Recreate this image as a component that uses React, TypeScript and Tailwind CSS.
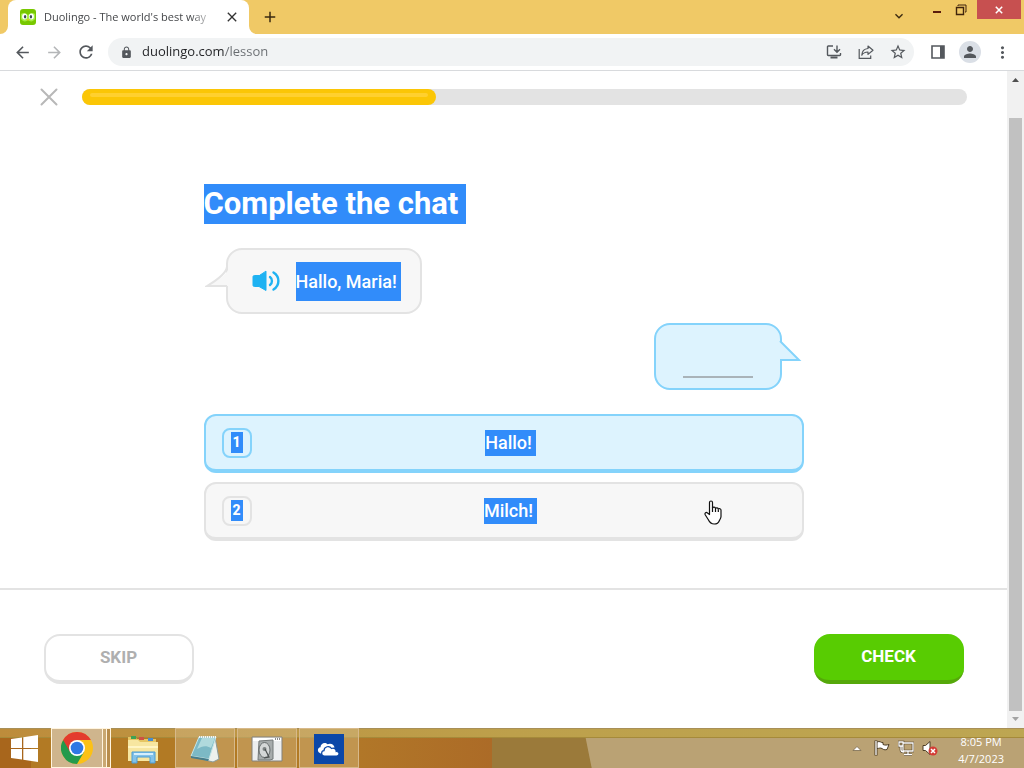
import { useState } from "react";
import type { ReactNode } from "react";
import {
  MdAdd,
  MdArrowBack,
  MdArrowForward,
  MdClose,
  MdExpandMore,
  MdLock,
  MdMoreVert,
  MdPerson,
  MdRefresh,
  MdStarBorder,
} from "react-icons/md";
import clsx from "clsx";

const options = ["Hallo!", "Milch!"];

interface IIconButton {
  label: string;
  className?: string;
  children: ReactNode;
}

const IconButton: React.FC<IIconButton> = ({ label, className, children }) => (
  <button
    type="button"
    aria-label={label}
    className={clsx(
      "flex h-7 w-8 shrink-0 items-center justify-center text-[#54585d]",
      className
    )}
  >
    {children}
  </button>
);

const OwlIcon = () => (
  <svg viewBox="0 0 16 16" className="h-4 w-4 shrink-0">
    <rect width="16" height="16" rx="3" fill="#78c800" />
    <path d="M1 5c2-2 5-1 7 1 2-2 5-3 7-1v5c-2 3-5 3-7 1-2 2-5 2-7-1z" fill="#a5ed42" />
    <ellipse cx="4.6" cy="7.6" rx="2.5" ry="3" fill="#fff" />
    <ellipse cx="11.4" cy="7.6" rx="2.5" ry="3" fill="#fff" />
    <ellipse cx="5.1" cy="7.8" rx="1.2" ry="1.7" fill="#3c4c55" />
    <ellipse cx="10.9" cy="7.8" rx="1.2" ry="1.7" fill="#3c4c55" />
    <path d="M6.8 10.2h2.4L8 12z" fill="#ffc200" />
  </svg>
);

const TitleBar = () => (
  <header className="flex h-[34px] bg-[#f0c966] pl-2 text-[#3a2a10]">
    <div className="relative flex w-[241px] items-center rounded-t-lg bg-white pl-3 pr-2">
      <svg viewBox="0 0 8 8" className="absolute bottom-0 -left-2 h-2 w-2">
        <path d="M8 0v8H0a8 8 0 0 0 8-8z" fill="#fff" />
      </svg>
      <svg viewBox="0 0 8 8" className="absolute bottom-0 -right-2 h-2 w-2">
        <path d="M0 0v8h8a8 8 0 0 1-8-8z" fill="#fff" />
      </svg>
      <OwlIcon />
      <span className="ml-2 w-[172px] whitespace-nowrap text-[11px] text-[#45474a] [mask-image:linear-gradient(90deg,#000_85%,transparent)]">
        Duolingo - The world's best way
      </span>
      <button type="button" aria-label="Close tab" className="ml-2 text-[#333]">
        <MdClose size={16} />
      </button>
    </div>
    <button type="button" aria-label="New tab" className="ml-3">
      <MdAdd size={18} />
    </button>
    <div className="ml-auto flex items-start">
      <button type="button" aria-label="Search tabs" className="mt-2 mr-[18px]">
        <MdExpandMore size={16} />
      </button>
      <button type="button" aria-label="Minimize" className="flex h-5 w-6 items-center justify-center">
        <svg viewBox="0 0 12 12" className="h-3 w-3">
          <path d="M2 8h8" stroke="#5a1c0c" strokeWidth="2" />
        </svg>
      </button>
      <button type="button" aria-label="Restore" className="mr-1 flex h-5 w-6 items-center justify-center">
        <svg viewBox="0 0 12 12" className="h-3 w-3" fill="none" stroke="#40240c">
          <path d="M3 2V1h8v7h-1" />
          <path d="M1.5 3.5h7v7h-7z" strokeWidth="1.4" />
        </svg>
      </button>
      <button
        type="button"
        aria-label="Close"
        className="mr-[3px] flex h-[19px] w-11 items-center justify-center bg-[#c75050] text-white"
      >
        <svg viewBox="0 0 10 10" className="h-2 w-2" stroke="currentColor" strokeWidth="1.9">
          <path d="M1 1l8 8M9 1L1 9" />
        </svg>
      </button>
    </div>
  </header>
);

const Toolbar = () => {
  const [url, setUrl] = useState("duolingo.com/lesson");

  return (
    <nav className="flex h-[37px] items-center border-b border-[#d8dadd] bg-white px-1.5">
      <IconButton label="Back">
        <MdArrowBack size={19} />
      </IconButton>
      <IconButton label="Forward" className="text-[#b4b6b8]">
        <MdArrowForward size={19} />
      </IconButton>
      <IconButton label="Reload">
        <MdRefresh size={20} />
      </IconButton>
      <div className="mr-2 ml-1.5 flex h-7 min-w-0 flex-1 items-center rounded-full bg-[#f1f3f4] pl-3">
        <MdLock size={13} className="shrink-0 text-[#54585d]" />
        <input
          aria-label="Address"
          value={url}
          onChange={(e) => setUrl(e.target.value)}
          className="ml-[9px] min-w-0 flex-1 bg-[linear-gradient(90deg,#202124_83px,#686c70_83px)] bg-clip-text text-[13px] text-transparent caret-black outline-none"
        />
        <IconButton label="Install">
          <svg viewBox="0 0 16 16" className="h-4 w-4" fill="none" stroke="currentColor" strokeWidth="1.4">
            <path d="M7 2H2.2a.7.7 0 0 0-.7.7v8.1c0 .4.3.7.7.7h11.6a.7.7 0 0 0 .7-.7V9M11 1.500v6M8 5.200l3 3 3-3" />
            <path d="M4.500 13.500h7" strokeWidth="2" />
          </svg>
        </IconButton>
        <IconButton label="Share">
          <svg viewBox="0 0 16 16" className="h-4 w-4" fill="none" stroke="currentColor" strokeWidth="1.200">
            <path d="M1.200 5v9.300h11.500V11.500" />
            <path d="M10 2l5 4.200-5 4.200V8C7 8 5 9 3.800 11.200 4 7.500 6.500 4.800 10 4.500z" strokeLinejoin="round" />
          </svg>
        </IconButton>
        <IconButton label="Bookmark">
          <MdStarBorder size={18} />
        </IconButton>
      </div>
      <IconButton label="Side panel">
        <svg viewBox="0 0 14 14" className="h-3.5 w-3.5">
          <path d="M1 1h12v12H1z" fill="none" stroke="currentColor" strokeWidth="1.600" />
          <path d="M9 1h4v12H9z" fill="currentColor" />
        </svg>
      </IconButton>
      <IconButton label="Profile">
        <span className="flex h-[22px] w-[22px] items-center justify-center rounded-full bg-[#dadfe6]">
          <MdPerson size={18} />
        </span>
      </IconButton>
      <IconButton label="Menu">
        <MdMoreVert size={19} />
      </IconButton>
    </nav>
  );
};

const LessonProgress = () => (
  <div className="mx-auto flex w-full max-w-[1007px] items-center gap-6 px-10 pt-[17px]">
    <button type="button" aria-label="Quit lesson">
      <svg viewBox="0 0 18 18" className="h-[18px] w-[18px]" stroke="#b8b8b8" strokeWidth="2">
        <path d="M1.500 1.500l15 15M16.500 1.500l-15 15" strokeLinecap="round" />
      </svg>
    </button>
    <div
      role="progressbar"
      aria-label="Lesson progress"
      aria-valuenow={40}
      className="h-4 flex-1 rounded-full bg-[#e3e3e3]"
    >
      <div className="h-4 w-2/5 rounded-full bg-[#fbc606] px-2 pt-1">
        <div className="h-1 rounded-full bg-[#ffd02f]" />
      </div>
    </div>
  </div>
);

const Chat = () => (
  <div className="mt-6">
    <div className="relative ml-[22px] flex h-[66px] w-fit items-center rounded-2xl border-2 border-[#e3e3e3] bg-[#f7f7f7] pr-[19px] pl-6">
      <svg viewBox="0 0 24 22" className="absolute top-4 -left-[23px] h-[22px] w-6">
        <path d="M24 1c-1 6-8 12-21 19h21z" fill="#f7f7f7" />
        <path d="M22 1c-1 6-8 12-20 19h20" fill="none" stroke="#e3e3e3" strokeWidth="2" />
      </svg>
      <button type="button" aria-label="Play audio">
        <svg viewBox="0 0 28 22" className="h-[22px] w-7" fill="none" stroke="#1fb2f2" strokeWidth="2.400" strokeLinecap="round">
          <path d="M14 1.500v19l-7-4H2.500C1.500 16.500 1 16 1 15V7C1 6 1.500 5.500 2.500 5.500H7z" fill="#1fb2f2" stroke="#1fb2f2" strokeWidth="1" />
          <path d="M18 7c2.600 2 2.600 6 0 8M21.500 2.500c6.500 4 6.500 13 0 17" />
        </svg>
      </button>
      <span className="ml-4 h-[39px] bg-[#318cfa] pr-1 text-lg leading-[39px] font-medium text-white">
        Hallo, Maria!
      </span>
    </div>
    <div className="relative mt-[9px] mr-[22px] ml-auto flex h-[67px] w-32 items-end justify-center rounded-2xl border-2 border-[#84d3fb] bg-[#ddf3fe] pb-2.5">
      <svg viewBox="0 0 26 22" className="absolute top-4 -right-6 h-[22px] w-[26px]">
        <path d="M0 0l3 1 19 18H0z" fill="#ddf3fe" />
        <path d="M2 0l19 19H2" fill="none" stroke="#84d3fb" strokeWidth="2" />
      </svg>
      <span className="h-0.5 w-[70px] bg-[#a9b3b9]" />
    </div>
  </div>
);

interface IOption {
  index: number;
  text: string;
  selected: boolean;
  onSelect: () => void;
}

const Option: React.FC<IOption> = ({ index, text, selected, onSelect }) => (
  <button
    type="button"
    aria-pressed={selected}
    onClick={onSelect}
    className={clsx(
      "flex h-[59px] w-full items-center rounded-xl border-2 border-b-4 px-4",
      selected ? "border-[#84d3fb] bg-[#ddf3fe]" : "border-[#e3e3e3] bg-[#f7f7f7]"
    )}
  >
    <span
      className={clsx(
        "flex h-[30px] w-[30px] items-center justify-center rounded-lg border-2 text-sm font-extrabold text-white",
        selected ? "border-[#84d3fb]" : "border-[#e3e3e3]"
      )}
    >
      <span className="h-[21px] w-3 bg-[#318cfa] leading-[21px]">{index}</span>
    </span>
    <span className="flex flex-1 justify-center pr-4">
      <span className="h-[26px] bg-[#318cfa] pr-1 text-lg leading-[26px] font-medium text-white">
        {text}
      </span>
    </span>
  </button>
);

const HandCursor = () => (
  <svg viewBox="0 0 18 25" className="pointer-events-none absolute right-[82px] bottom-4 h-[25px] w-[18px]">
    <path
      d="M5.500 14.500V2.500c0-2 3-2 3 0V8c.5-1.300 2.800-1 3 .4.700-1 2.600-.7 2.800.7.900-.9 2.700-.4 2.700 1.200v6.200c0 2-1.300 3-1.700 4.200-.8 2.300-2.600 3.300-5.100 3.300-3.300 0-4.700-1.700-6-4.500L1.200 14.700c-.8-1.900 1-3 2.300-1.700z"
      fill="#fff"
      stroke="#111"
      strokeWidth="1.200"
      strokeLinejoin="round"
    />
    <path d="M8.500 7.500v4.500M11.500 8.500V12M14.300 9.500V12" stroke="#111" strokeWidth="1.200" />
  </svg>
);

const Lesson = () => {
  const [selected, setSelected] = useState(0);

  return (
    <main className="flex min-w-0 flex-1 flex-col font-[Roboto,sans-serif]">
      <LessonProgress />
      <section className="mx-auto w-full max-w-[600px] flex-1 pt-[78px] pb-10">
        <h1 className="w-fit bg-[#318cfa] pr-2 text-[31px] leading-10 font-bold text-white">
          Complete the chat
        </h1>
        <Chat />
        <div className="relative mt-6 flex flex-col gap-[9px]">
          {options.map((text, i) => (
            <Option
              key={text}
              index={i + 1}
              text={text}
              selected={selected === i}
              onSelect={() => setSelected(i)}
            />
          ))}
          <HandCursor />
        </div>
      </section>
      <footer className="border-t-2 border-[#e3e3e3]">
        <div className="mx-auto flex h-[138px] max-w-[1000px] items-center justify-between px-10 text-[17px] font-bold">
          <button type="button" className="h-[50px] w-[150px] rounded-2xl border-2 border-b-4 border-[#e3e3e3] text-[#afafaf]">
            SKIP
          </button>
          <button type="button" className="h-[50px] w-[150px] rounded-2xl border-b-4 border-[#55a80a] bg-[#58cc02] text-white">
            CHECK
          </button>
        </div>
      </footer>
    </main>
  );
};

const ScrollBar = () => (
  <div aria-hidden="true" className="flex w-[17px] flex-col items-center bg-[#f1f1f1]">
    <svg viewBox="0 0 17 17" className="h-[17px] w-[17px]">
      <path d="M5 11l3.500-4 3.500 4z" fill="#505050" />
    </svg>
    <div className="mt-[30px] w-[13px] flex-1 bg-[#c1c1c1]" />
    <svg viewBox="0 0 17 17" className="h-[17px] w-[17px]">
      <path d="M5 6l3.500 4L12 6z" fill="#a3a3a3" />
    </svg>
  </div>
);

const ChromeIcon = () => (
  <svg viewBox="0 0 32 32" className="h-8 w-8">
    <circle cx="16" cy="16" r="16" fill="#fbc116" />
    <path d="M16 16L2.140 8A16 16 0 0 0 16 32l7-12z" fill="#239a4c" />
    <path d="M16 16V8h13.860A16 16 0 0 0 2.140 8L9.100 20z" fill="#e33b2e" />
    <circle cx="16" cy="16" r="8" fill="#fff" />
    <circle cx="16" cy="16" r="6.300" fill="#2f78e4" />
  </svg>
);

const ExplorerIcon = () => (
  <svg viewBox="0 0 34 30" className="h-[30px] w-[34px]">
    <path d="M2 5V3h7l2 2h19v3H2z" fill="#e6c664" />
    <path d="M5 2h5v3H5z" fill="#3da254" />
    <path d="M13 3h5v3h-5z" fill="#ce5144" />
    <path d="M22 4h5v3h-5z" fill="#478bd0" />
    <path d="M2 6h10l2 2h18v19H2z" fill="#f7e6a0" />
    <path d="M2 12h30v2H2z" fill="#fff5c4" />
    <path d="M6 18h23v11h-5v-6H11v6H6z" fill="#83c2e9" stroke="#4b9cd3" />
    <path d="M8 20h19" stroke="#d5effd" strokeWidth="2" />
  </svg>
);

const NotepadIcon = () => (
  <svg viewBox="0 0 34 30" className="h-[30px] w-[34px]">
    <path d="M27 3l4 22-6 3-8-2z" fill="#edf1ee" stroke="#8a9a98" />
    <path d="M11 3h17l-7 22-18-3z" fill="#7cb9c5" stroke="#c6e5e7" />
    <path d="M14 4h13l-4 10c-5-3-9-2-14 1z" fill="#b0dadd" />
    <path d="M3 22l18 3-1 2-17-3z" fill="#477d8b" />
    <path d="M11 3h17" stroke="#f5f5f5" strokeWidth="2" strokeDasharray="1 1" />
  </svg>
);

const DiskIcon = () => (
  <svg viewBox="0 0 32 28" className="h-7 w-8">
    <path d="M1 2h30v24H1z" fill="#eceeef" stroke="#83817b" />
    <path d="M2 3h28v3H2z" fill="#fff" />
    <path d="M24 4h5" stroke="#666" strokeWidth="1.500" strokeDasharray="1 1" />
    <path d="M8 6l14-1v19l-3 1H7z" fill="#a6abab" stroke="#737878" />
    <ellipse cx="13.500" cy="15" rx="5.500" ry="7.500" fill="#d4d7d7" stroke="#666c6d" />
    <circle cx="13.500" cy="14" r="2" fill="#7c8282" />
    <path d="M14 14l4 8-5 1" fill="none" stroke="#4c5050" strokeWidth="1.200" />
  </svg>
);

const OneDriveIcon = () => (
  <svg viewBox="0 0 30 30" className="h-[30px] w-[30px]">
    <path d="M0 0h30v30H0z" fill="#0b47a8" />
    <path d="M6.500 19.500a3.200 3.200 0 0 1 0-6.300C6.500 9.500 11 7.500 13.500 10.200c3.500-1.500 6.500.3 7 3.300z" fill="#fff" />
    <path
      d="M10.500 22c-3.700 0-3.700-5-.5-5.300 0-4.200 5.500-5.500 7.500-2.200 2.700-1 4.800.7 4.700 3 3.600-.2 3.800 4.500.3 4.500z"
      fill="#fff"
      stroke="#0b47a8"
      strokeWidth="1.200"
    />
  </svg>
);

const apps = [
  { name: "File Explorer", icon: <ExplorerIcon />, running: false },
  { name: "Notepad", icon: <NotepadIcon />, running: true },
  { name: "Disk Manager", icon: <DiskIcon />, running: true },
  { name: "OneDrive", icon: <OneDriveIcon />, running: true },
];

const Wallpaper = () => (
  <div aria-hidden="true" className="absolute inset-0 flex">
    <div className="w-[3%] bg-[#a8661c]" />
    <div className="w-[32%] bg-[#b27a24]" />
    <div className="w-[13%] bg-linear-to-r from-[#b17728] to-[#ac6b27]" />
    <div className="flex-1 bg-[#9b7a3a]" />
    <div className="absolute inset-y-0 right-0 left-[57%] bg-[#baa274] [clip-path:polygon(0_0,100%_0,100%_100%,8px_100%)]" />
    <div className="absolute inset-x-0 top-0 h-2.5 border-t border-b border-t-[#a88f58] border-b-[#a58a3a] bg-linear-to-r from-[#bd8c3b] via-[#bda04b] to-[#bda652]" />
  </div>
);

const TaskBar = () => (
  <div className="relative h-10">
    <Wallpaper />
    <div className="relative flex h-full">
      <button type="button" aria-label="Start" className="flex w-12 items-center justify-center">
        <svg viewBox="0 0 27 27" className="h-[27px] w-[27px]" fill="#fff">
          <path d="M0 4l11-1.600V13H0zM12.300 2.200L27 0v13H12.300zM0 14h11v10.600L0 23zM12.300 14H27v13l-14.700-2.200z" />
        </svg>
      </button>
      <button
        type="button"
        aria-label="Google Chrome"
        className="ml-[3px] flex w-[52px] items-center justify-center border border-[#fff4df] bg-[#cfb58d]"
      >
        <ChromeIcon />
      </button>
      <span className="w-1 border-y border-r border-[#fff4df] bg-[#c9a872]" />
      <span className="w-1 border-y border-r border-[#fff4df] bg-[#b88d4c]" />
      <div className="ml-0.5 flex gap-0.5">
        {apps.map(({ name, icon, running }) => (
          <button
            key={name}
            type="button"
            aria-label={name}
            className={clsx(
              "flex w-15 items-center justify-center pt-0.5",
              running && "border border-[#d7b98a] bg-[#d6be92]/40"
            )}
          >
            {icon}
          </button>
        ))}
      </div>
      <div className="ml-auto flex items-center gap-2 pr-5 text-white">
        <button type="button" aria-label="Show hidden icons" className="mr-1">
          <svg viewBox="0 0 10 8" className="h-2 w-2.5">
            <path d="M1 6.500l4-4 4 4z" fill="#fff" stroke="#6b5c40" strokeWidth=".7" />
          </svg>
        </button>
        <svg viewBox="0 0 16 16" className="h-4 w-4">
          <path d="M2 .5v15" stroke="#4c3d25" strokeWidth="3" />
          <path d="M3 2c3-1.500 4 1 6 .5v2c2 1 4 .5 6 0-1 2-1 3-2 5-3 1-4-.5-5-1-2-1-3 0-5 0z" fill="#fff" stroke="#4c3d25" />
          <path d="M2 1v14" stroke="#fff" strokeWidth="1.300" />
        </svg>
        <svg viewBox="0 0 16 16" className="h-4 w-4" fill="none">
          <path d="M5 3h10v8H5zM10 11v3M6 14.500h8M1 2h4v4H1zM3 6v4q0 2 3 2" stroke="#4c3d25" strokeWidth="2.600" />
          <path d="M5 3h10v8H5zM10 11v3M6 14.500h8M1 2h4v4H1zM3 6v4q0 2 3 2" stroke="#fff" strokeWidth="1.300" />
        </svg>
        <svg viewBox="0 0 16 16" className="h-4 w-4">
          <path d="M1 5.500h2.500L8 1.500v13l-4.500-4H1z" fill="#fff" stroke="#4c3d25" />
          <circle cx="11" cy="11" r="4.500" fill="#d33c35" />
          <path d="M9 9l4 4M13 9l-4 4" stroke="#fff" strokeWidth="1.500" />
        </svg>
        <div className="ml-3 pt-1 text-center text-[11px] leading-[17px]">
          <div>8:05 PM</div>
          <div>4/7/2023</div>
        </div>
      </div>
    </div>
  </div>
);

const App = () => (
  <div className="flex min-h-screen flex-col bg-white font-['Open_Sans',sans-serif]">
    <TitleBar />
    <Toolbar />
    <div className="flex flex-1">
      <Lesson />
      <ScrollBar />
    </div>
    <TaskBar />
  </div>
);

export default App;
